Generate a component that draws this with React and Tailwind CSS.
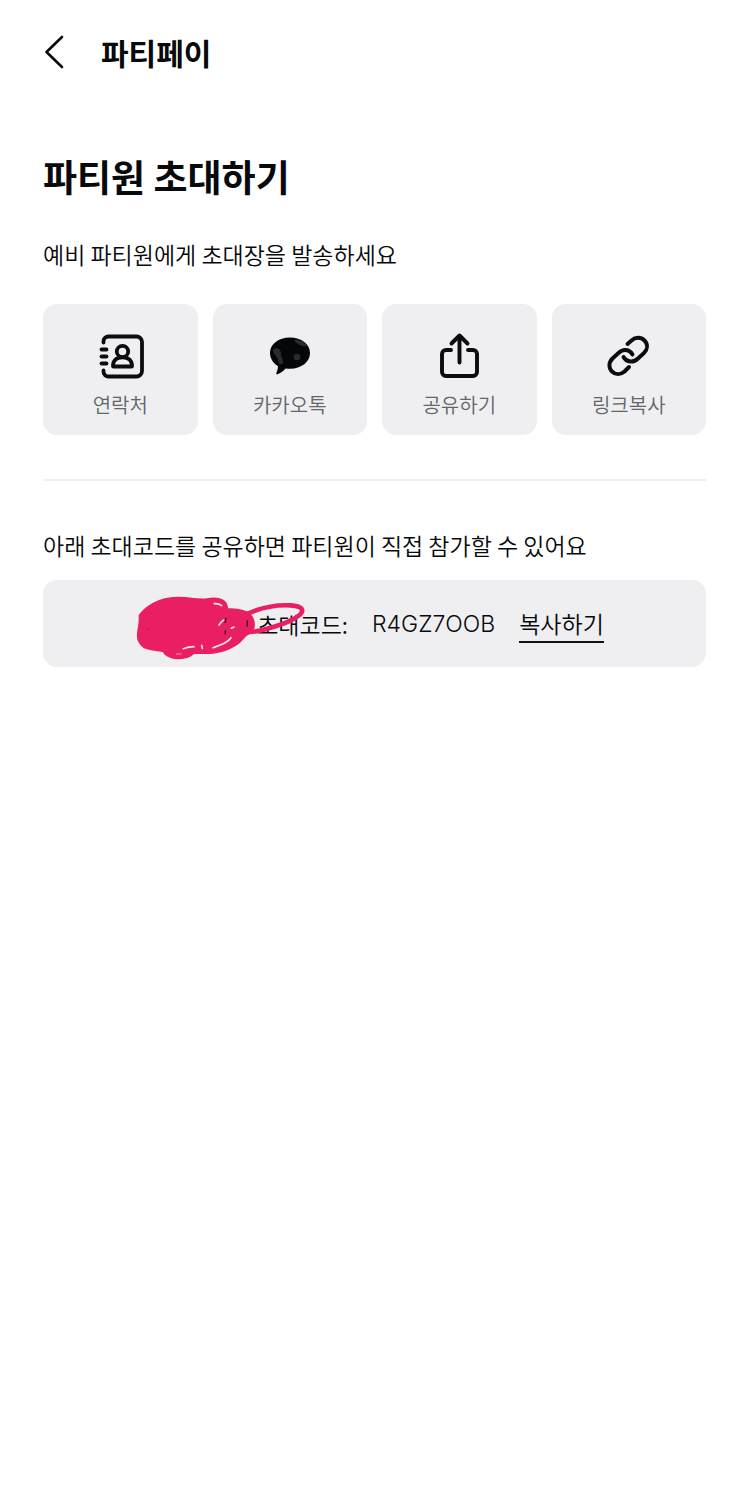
import { useState } from "react";

const CODE = "R4GZ7OOB";

function ContactIcon() {
	return (
		<svg
			viewBox="0 0 48 48"
			className="size-12"
			fill="none"
			stroke="#0b0c0f"
			strokeWidth="3.800"
			strokeLinecap="round"
			strokeLinejoin="round"
			aria-hidden="true"
		>
			<path d="M7.500 10.500V9.500a5 5 0 0 1 5-5h28a5.500 5.500 0 0 1 5.500 5.500v29a5.500 5.500 0 0 1-5.500 5.500h-28a5 5 0 0 1-5-5v-1" />
			<path d="M5.500 17.500h5M5.500 24.500h5M5.500 31.500h5" />
			<circle cx="26.500" cy="19.500" r="5.700" />
			<path d="M17 34.500h19c.3-6.200-3.500-9.200-9.500-9.200s-9.800 3-9.500 9.200Z" />
		</svg>
	);
}

function TalkIcon() {
	return (
		<svg viewBox="0 0 48 48" className="size-12" aria-hidden="true">
			<path
				d="M24 5.500C12.500 5.500 4 12 4 21c0 5.500 3.200 10.300 8 13.200-.2 3-.7 5-1.600 6.600-.6 1.200.5 2 1.700 1.300 2.900-1.300 5.400-3.400 7.500-5.700 1.500.3 2.900.4 4.400.4 11.500 0 20-7 20-15.800S35.500 5.500 24 5.500Z"
				fill="#050608"
			/>
			<path
				d="M28 8c4-1 10 1 13 6-4 1-10-1-13-6ZM7 18c4-4 8-1 8 4 0 4 3 6 2 9-2 3-5 0-5-2 0-5-5-6-5-11Z"
				fill="#2a2b2d"
			/>
			<circle cx="31" cy="25" r="3.300" fill="#2a2b2d" />
		</svg>
	);
}

function ShareIcon() {
	return (
		<svg
			viewBox="0 0 48 48"
			className="size-12"
			fill="none"
			stroke="#0b0c0f"
			strokeWidth="3.900"
			strokeLinecap="round"
			strokeLinejoin="round"
			aria-hidden="true"
		>
			<path d="M16 18H11a4 4 0 0 0-4 4v18a4 4 0 0 0 4 4h27a4 4 0 0 0 4-4V22a4 4 0 0 0-4-4h-5" />
			<path d="M24.500 30.500V3.500M16.500 11.500l8-8 8 8" />
		</svg>
	);
}

function LinkIcon() {
	return (
		<svg
			viewBox="0 0 48 48"
			className="size-12"
			fill="none"
			stroke="#0b0c0f"
			strokeWidth="3.900"
			strokeLinecap="round"
			strokeLinejoin="round"
			aria-hidden="true"
		>
			<path d="M22.500 12l4-3.500c4-3.700 9.500-3.500 13 0s3.300 8.500-.5 12.500l-6 5.500c-4.500 4.500-11.500 4-14.500-1.500" />
			<path d="M27.500 22.500c-3-5.500-9.500-6-14-1.500l-6 5.500C3.500 30.500 3.500 36 7 39.500s8.500 3.500 12.500 0L24 35" />
		</svg>
	);
}

// marker strokes covering the owner's name
function Scribble() {
	return (
		<svg
			viewBox="40 55 525 210"
			className="absolute -left-3 -top-3 h-[70px] w-[175px] max-w-none"
			fill="none"
			stroke="#e91e63"
			strokeLinecap="round"
			strokeLinejoin="round"
			aria-hidden="true"
		>
			<path
				d="M57 118C78 88 120 64 172 63c35-1 62 8 90 5 34-8 64 4 63 30 26 0 48 3 62 13 16 8 22 32 17 48-6 14-18 18-26 24-20 26-48 42-89 50-25 4-46 1-67 3-14 14-38 17-62 13-15-4-25-9-31-20-22-2-42-6-56-11C56 205 50 192 52 172c2-15 6-28 5-54Z"
				fill="#e91e63"
				stroke="none"
			/>
			<path
				d="M384 114c40-18 86-27 128-25 24 1 38 8 35 19-6 17-42 31-74 42-28 9-55 18-85 19"
				strokeWidth="14"
			/>
			<path
				d="M284 84c9-1 17 2 22 6M191 219c10-4 20-6 32-6M246 209l2 9M280 216c20-8 42-12 54-30M298 148c5-7 8-11 14-15M335 158l8-4"
				stroke="#f8e3eb"
				strokeWidth="5"
			/>
			<path d="M170 235h14" stroke="#f48fb1" strokeWidth="3" />
			<path d="M319 128l-3 12M317 166v8M383 136v16" stroke="#3a1020" strokeWidth="4" />
			<circle cx="84" cy="161" r="2" fill="#7a1036" stroke="none" />
		</svg>
	);
}

const methods = [
	{ label: "연락처", Icon: ContactIcon },
	{ label: "카카오톡", Icon: TalkIcon },
	{ label: "공유하기", Icon: ShareIcon },
	{ label: "링크복사", Icon: LinkIcon },
];

export default function App() {
	const [copied, setCopied] = useState(false);

	function copyCode() {
		navigator.clipboard?.writeText(CODE).catch(() => {});
		setCopied(true);
	}

	return (
		<div className="min-h-screen bg-white pr-11 pl-[43px] font-['Noto_Sans_CJK_KR',sans-serif] font-[350] text-[#08090b]">
			<header className="flex h-[103px] items-center gap-9">
				<button type="button" aria-label="뒤로">
					<svg
						viewBox="0 0 22 34"
						className="h-[34px] w-[22px]"
						fill="none"
						stroke="#0b0c0f"
						strokeWidth="2.600"
						strokeLinecap="round"
						strokeLinejoin="round"
						aria-hidden="true"
					>
						<path d="M19 2 3.500 17 19 32" />
					</svg>
				</button>
				<span className="text-[30px] leading-10 font-bold">파티페이</span>
			</header>

			<main>
				<h1 className="pt-[47px] text-[37px] leading-[52px] font-bold">
					파티원 초대하기
				</h1>
				<p className="mt-[34px] text-[23px] leading-9">
					예비 파티원에게 초대장을 발송하세요
				</p>

				<div className="mt-8 grid grid-cols-4 gap-[15px]">
					{methods.map(({ label, Icon }) => (
						<button
							key={label}
							type="button"
							className="flex h-[131px] flex-col items-center rounded-[14px] bg-[#efeff1] pt-7 text-[20px] leading-[50px] text-[#62656c]"
						>
							<Icon />
							{label}
						</button>
					))}
				</div>

				<hr className="mt-11 border-t-2 border-[#efeff1]" />

				<p className="mt-[46px] text-[23px] leading-9">
					아래 초대코드를 공유하면 파티원이 직접 참가할 수 있어요
				</p>
				<div className="mt-[17px] flex h-[87px] items-center justify-center gap-6 rounded-[14px] bg-[#efeff1] pt-px text-[23px] leading-9">
					<span className="relative flex">
						<span className="w-[112px]" />
						초대코드:
						<Scribble />
					</span>
					<span className="font-['Inter','Noto_Sans_CJK_KR',sans-serif]">
						{CODE}
					</span>
					<button
						type="button"
						onClick={copyCode}
						aria-pressed={copied}
						className="border-b-2 border-[#101114]"
					>
						복사하기
					</button>
				</div>
			</main>
		</div>
	);
}
